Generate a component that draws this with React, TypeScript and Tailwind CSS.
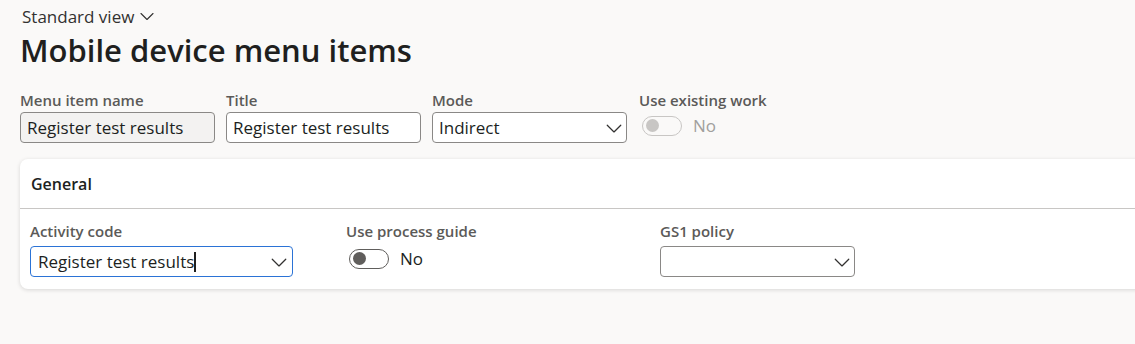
import React from "react";

const Chevron = ({ className = "" }: { className?: string }) => (
  <svg className={className} viewBox="0 0 16 16" fill="none" stroke="currentColor" strokeWidth="1.1" strokeLinecap="round" strokeLinejoin="round">
    <path d="M2 5.5l6 6 6-6" />
  </svg>
);

const Label = ({ children }: { children: React.ReactNode }) => (
  <div className="text-[15px] leading-[20px] font-semibold text-[#5b5a58] whitespace-nowrap">{children}</div>
);

const Toggle = ({ disabled }: { disabled?: boolean }) => (
  <div className="flex items-center gap-[11px]">
    <div
      className={
        disabled
          ? "w-[40px] h-[20px] rounded-full border border-[#c8c6c4] flex items-center px-[3px]"
          : "w-[40px] h-[20px] rounded-full border border-[#605e5c] flex items-center px-[3px]"
      }
    >
      <div className={disabled ? "w-[13px] h-[13px] rounded-full bg-[#c8c6c4]" : "w-[13px] h-[13px] rounded-full bg-[#605e5c]"} />
    </div>
    <span className={disabled ? "text-[17px] text-[#a19f9d]" : "text-[17px] text-[#201f1e]"}>No</span>
  </div>
);

export default function App() {
  return (
    <div className="w-[1135px] h-[344px] overflow-hidden bg-[#faf9f8] font-['Segoe_UI','Open_Sans',sans-serif] text-[#201f1e]">
      <div className="pl-[22px] pt-[6px] flex items-center gap-[5px] text-[17px] leading-[22px] text-[#323130]">
        <span>Standard view</span>
        <Chevron className="w-[16px] h-[16px] mt-[-2px]" />
      </div>
      <h1 className="pl-[20px] text-[31px] leading-[40px] font-semibold text-[#201f1e] mt-[2px]">Mobile device menu items</h1>

      <div className="flex pl-[20px] gap-[11px] mt-[20px]">
        <div className="w-[195px] flex flex-col gap-[2px]">
          <Label>Menu item name</Label>
          <div className="h-[31px] rounded-[4px] border border-[#8a8886] bg-[#f3f2f1] flex items-center px-[6px] text-[17px]">Register test results</div>
        </div>
        <div className="w-[195px] flex flex-col gap-[2px]">
          <Label>Title</Label>
          <div className="h-[31px] rounded-[4px] border border-[#8a8886] bg-white flex items-center px-[6px] text-[17px]">Register test results</div>
        </div>
        <div className="w-[195px] flex flex-col gap-[2px]">
          <Label>Mode</Label>
          <div className="h-[31px] rounded-[4px] border border-[#8a8886] bg-white flex items-center justify-between pl-[6px] pr-[3px] text-[17px]">
            <span>Indirect</span>
            <Chevron className="w-[18px] h-[18px] text-[#323130]" />
          </div>
        </div>
        <div className="flex flex-col gap-[3px] ml-[1px]">
          <Label>Use existing work</Label>
          <div className="pl-[3px]"><Toggle disabled /></div>
        </div>
      </div>

      <div className="ml-[20px] mt-[16px] w-[1200px] bg-white rounded-[8px] shadow-[0_1px_4px_rgba(0,0,0,0.14)]">
        <div className="h-[49px] flex items-center px-[11px] text-[16px] font-semibold text-[#201f1e]">General</div>
        <div className="border-t border-[#c8c6c4]" />
        <div className="flex pl-[10px] pt-[12px] pb-[12px]">
          <div className="w-[316px] flex flex-col gap-[5px]">
            <Label>Activity code</Label>
            <div className="w-[263px] h-[31px] rounded-[4px] border border-[#2b73d6] bg-white flex items-center justify-between pl-[7px] pr-[4px] text-[17px]">
              <span className="flex items-center">Register test results<span className="inline-block w-[1.5px] h-[20px] bg-[#201f1e]" /></span>
              <Chevron className="w-[18px] h-[18px] text-[#323130]" />
            </div>
          </div>
          <div className="w-[314px] flex flex-col gap-[5px]">
            <Label>Use process guide</Label>
            <div className="pl-[3px]"><Toggle /></div>
          </div>
          <div className="w-[195px] flex flex-col gap-[5px]">
            <Label>GS1 policy</Label>
            <div className="h-[31px] rounded-[4px] border border-[#8a8886] bg-white flex items-center justify-end pr-[3px]">
              <Chevron className="w-[18px] h-[18px] text-[#323130]" />
            </div>
          </div>
        </div>
      </div>
    </div>
  );
}
